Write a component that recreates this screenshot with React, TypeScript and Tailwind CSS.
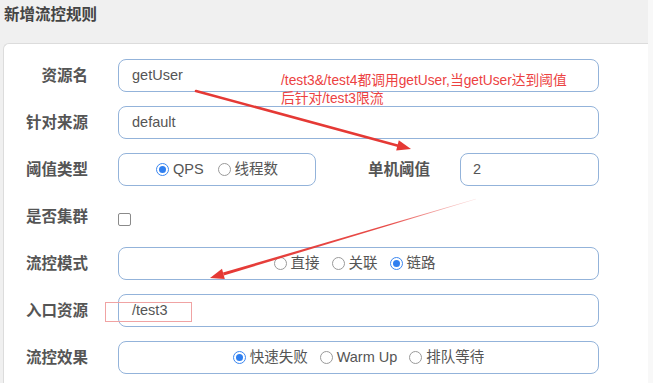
const cjk = { fontFamily: '"Liberation Sans", "Noto Sans CJK SC", sans-serif' };

function Radio({ checked, label }: { checked?: boolean; label: string }) {
  return (
    <span className="flex items-center gap-[4px]">
      <span
        className={`flex h-[13px] w-[13px] items-center justify-center rounded-full border bg-white ${
          checked ? "border-[#3b87f0]" : "border-[#9a9a9a]"
        }`}
      >
        {checked && <span className="h-[7px] w-[7px] rounded-full bg-[#2f7ff0]" />}
      </span>
      <span>{label}</span>
    </span>
  );
}

function Label({ text, className = "" }: { text: string; className?: string }) {
  return (
    <div className={`shrink-0 text-right text-[15.5px] font-bold text-[#555] ${className}`}>{text}</div>
  );
}

const box =
  "flex h-[33px] items-center rounded-[8px] border border-[#93b3da] bg-white text-[14.5px] text-[#555]";

function Row({ label, children }: { label: string; children: React.ReactNode }) {
  return (
    <div className="flex h-[33px] items-center">
      <Label text={label} className="w-[84px]" />
      <div className="ml-[30px] flex flex-1 items-center">{children}</div>
    </div>
  );
}

export default function App() {
  return (
    <div className="relative flex h-[383px] w-[653px] overflow-hidden bg-[#f0f0f0]" style={cjk}>
      <div className="flex w-[648px] flex-col">
        <h1 className="h-[43px] pl-[4px] pt-[3px] text-[15.5px] font-bold text-[#444]">新增流控规则</h1>
        <div className="ml-[3px] flex flex-1 flex-col gap-[14px] rounded-tl-[6px] border-l border-t border-[#dcdcdc] bg-white pr-[49px] pt-[15px]">
          <Row label="资源名">
            <div className={`${box} flex-1 pl-[13px]`}>getUser</div>
          </Row>
          <Row label="针对来源">
            <div className={`${box} flex-1 pl-[13px]`}>default</div>
          </Row>
          <Row label="阈值类型">
            <div className={`${box} w-[198px] justify-center gap-[14px]`}>
              <Radio checked label="QPS" />
              <Radio label="线程数" />
            </div>
            <Label text="单机阈值" className="w-[114px]" />
            <div className={`${box} ml-[30px] flex-1 pl-[12px]`}>2</div>
          </Row>
          <Row label="是否集群">
            <span className="mt-[6px] h-[13px] w-[13px] rounded-[2px] border border-[#8a8a8a] bg-white" />
          </Row>
          <Row label="流控模式">
            <div className={`${box} flex-1 justify-center gap-[12px] pr-[8px]`}>
              <Radio label="直接" />
              <Radio label="关联" />
              <Radio checked label="链路" />
            </div>
          </Row>
          <Row label="入口资源">
            <div className={`${box} flex-1 pl-[13px]`}>/test3</div>
          </Row>
          <Row label="流控效果">
            <div className={`${box} flex-1 justify-center gap-[12px]`}>
              <Radio checked label="快速失败" />
              <Radio label="Warm Up" />
              <Radio label="排队等待" />
            </div>
          </Row>
        </div>
      </div>
      <div className="flex-1 bg-[#f8f8f8]" />

      <div className="absolute left-[281px] top-[72px] text-[13.75px] leading-[18px] text-[#ec4242]">
        <div>/test3&amp;/test4都调用getUser,当getUser达到阈值</div>
        <div>后针对/test3限流</div>
      </div>

      <div className="absolute left-[105px] top-[302px] h-[20px] w-[87px] border border-[#f0a3a3]" />

      <svg className="pointer-events-none absolute left-0 top-0" width="653" height="383">
        <defs>
          <linearGradient id="fade" x1="476" y1="199" x2="223" y2="274" gradientUnits="userSpaceOnUse">
            <stop offset="0" stopColor="#e53935" stopOpacity="0.15" />
            <stop offset="0.35" stopColor="#e53935" stopOpacity="0.9" />
            <stop offset="1" stopColor="#e53935" />
          </linearGradient>
        </defs>
        <line x1="196" y1="91" x2="399" y2="146" stroke="#e53935" strokeWidth="2.6" strokeLinecap="round" />
        <polygon points="411,149 396.2,150.6 398.8,140.2" fill="#e53935" />
        <polygon points="476.1,198.7 475.9,199.3 223.8,275.4 223,272.6" fill="url(#fade)" />
        <polygon points="210,278 224.8,279 222,268.8" fill="#e53935" />
      </svg>
    </div>
  );
}
